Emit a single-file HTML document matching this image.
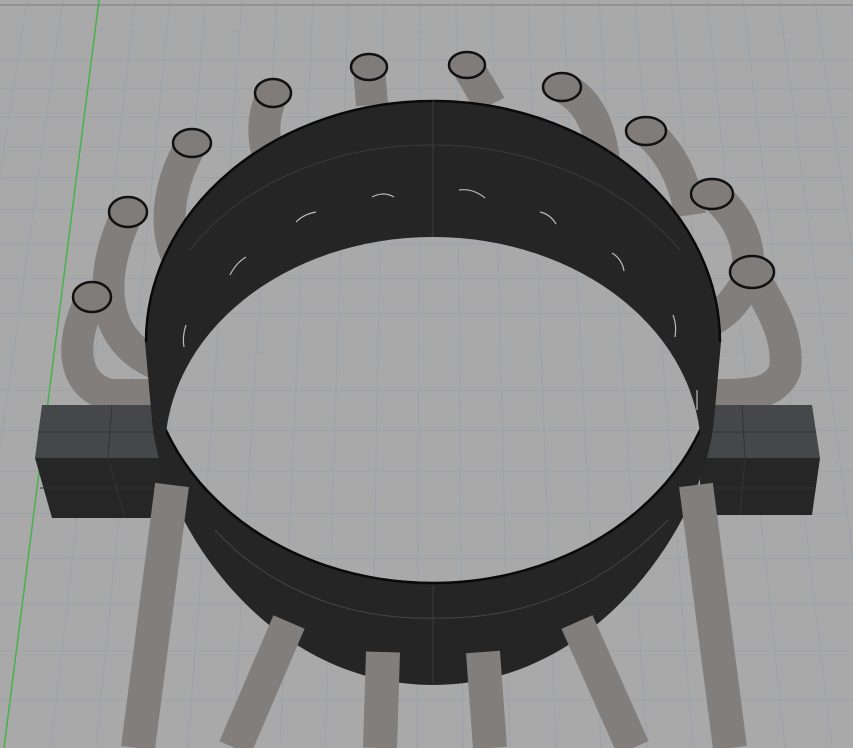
<!DOCTYPE html>
<html><head><meta charset="utf-8"><style>html,body{margin:0;padding:0;background:#a9a9a9}svg{display:block}</style></head><body>
<svg width="853" height="748" viewBox="0 0 853 748" xmlns="http://www.w3.org/2000/svg">
<defs>
<g id="grid">
<rect width="853" height="748" fill="#a9a9a9"/>
<g stroke="#9ba3ad" stroke-width="1" fill="none">
<path d="M0,32H853M0,60H853M0,89H853M0,117H853M0,147H853M0,178H853M0,210H853M0,244H853M0,278H853M0,314H853M0,352H853M0,390H853M0,430H853M0,471H853M0,514H853M0,558H853M0,604H853M0,651H853M0,700H853"/>
<path d="M27,0L-88,748M63,0L-42,748M135,0L51,748M170,0L96,748M206,0L142,748M242,0L188,748M277,0L233,748M313,0L280,748M348,0L325,748M384,0L371,748M420,0L417,748M456,0L463,748M492,0L510,748M528,0L556,748M563,0L601,748M599,0L647,748M635,0L693,748M671,0L739,748M707,0L785,748M743,0L832,748M779,0L878,748M815,0L925,748M851,0L971,748"/>
</g>
<path d="M0,5H853" stroke="#8c8c8c" stroke-width="1.5"/>
<path d="M99,0L4,748" stroke="#49b14a" stroke-width="1.5"/>
</g>
<clipPath id="cA"><ellipse cx="433" cy="342" rx="286" ry="240"/></clipPath>
<clipPath id="cB"><ellipse cx="433" cy="452" rx="268" ry="215"/></clipPath>
</defs>
<use href="#grid"/>
<!-- back tubes -->
<g fill="none" stroke="#827e7c" stroke-width="32" stroke-linecap="butt">
<path d="M92,297 C70,340 70,385 110,395 L170,395"/>
<path d="M128,212 C100,270 95,340 160,365"/>
<path d="M192,143 C165,190 160,240 190,280"/>
<path d="M273,93 C262,115 262,140 270,160"/>
<path d="M369,67 L372,105"/>
<path d="M467,65 C475,80 485,95 490,105"/>
<path d="M562,87 C590,100 600,130 604,160"/>
<path d="M646,131 C670,150 685,180 690,215"/>
<path d="M712,194 C740,215 755,250 745,285 C730,310 720,315 712,320"/>
<path d="M752,272 C765,300 790,330 785,370 C775,395 750,395 715,395"/>
</g>
<g fill="#7f7c7a" stroke="#111" stroke-width="2.5">
<ellipse cx="92" cy="297" rx="19" ry="15"/>
<ellipse cx="128" cy="212" rx="19" ry="15"/>
<ellipse cx="192" cy="143" rx="19" ry="14"/>
<ellipse cx="273" cy="93" rx="18" ry="14"/>
<ellipse cx="369" cy="67" rx="18" ry="13"/>
<ellipse cx="467" cy="65" rx="18" ry="13"/>
<ellipse cx="562" cy="87" rx="19" ry="14"/>
<ellipse cx="646" cy="131" rx="20" ry="14"/>
<ellipse cx="712" cy="194" rx="21" ry="15"/>
<ellipse cx="752" cy="272" rx="22" ry="16"/>
</g>
<!-- blocks -->
<g>
<polygon points="42,405 170,405 170,458 35,458" fill="#46474a"/>
<polygon points="35,458 170,458 170,518 52,518" fill="#262626"/>
<path d="M38,432H170M40,488H170M112,405L108,458L125,518" stroke="#333" stroke-width="1" fill="none"/>
<polygon points="700,405 812,405 820,458 700,458" fill="#46474a"/>
<polygon points="700,458 820,458 812,515 700,515" fill="#262626"/>
<path d="M700,432H816M700,488H816M742,405L745,458L740,515" stroke="#333" stroke-width="1" fill="none"/>
</g>
<!-- ring -->
<path d="M145,342 A288,242 0 0 1 721,342 L714,420 C705,520 600,685 433,685 C265,685 160,520 152,420 Z" fill="#252525"/>
<g clip-path="url(#cA)"><g clip-path="url(#cB)"><use href="#grid"/></g></g>
<ellipse cx="433" cy="342" rx="287" ry="241" fill="none" stroke="#0a0a0a" stroke-width="2.5" clip-path="url(#cB)"/>
<path d="M146,342 A287,241 0 0 1 720,342" fill="none" stroke="#0a0a0a" stroke-width="2.5"/>
<path d="M215,530 C270,590 350,620 433,618 C520,620 600,590 668,520" fill="none" stroke="#444" stroke-width="1"/>
<path d="M190,250 C300,110 560,110 680,250" fill="none" stroke="#3a3a3a" stroke-width="1"/>
<path d="M433,100V237M433,585V685" stroke="#3a3a3a" stroke-width="1"/>
<g fill="none" stroke="#bbb" stroke-width="1.2">
<path d="M372,197 q12,-6 22,0"/><path d="M459,190 q14,-2 26,8"/><path d="M540,212 q10,2 16,12"/><path d="M612,253 q10,6 12,18"/><path d="M673,315 q4,10 2,22"/><path d="M697,390 v20"/>
<path d="M296,222 q8,-8 20,-10"/><path d="M230,275 q6,-12 16,-18"/><path d="M186,325 q-4,12 -2,22"/>
</g>
<!-- front tubes -->
<g fill="none" stroke="#827e7c" stroke-width="34">
<path d="M172,485 L138,748"/>
<path d="M289,622 L235,748"/>
<path d="M383,652 L380,748"/>
<path d="M483,652 L490,748"/>
<path d="M577,622 L633,748"/>
<path d="M696,485 L730,748"/>
</g>
</svg>
</body></html>
